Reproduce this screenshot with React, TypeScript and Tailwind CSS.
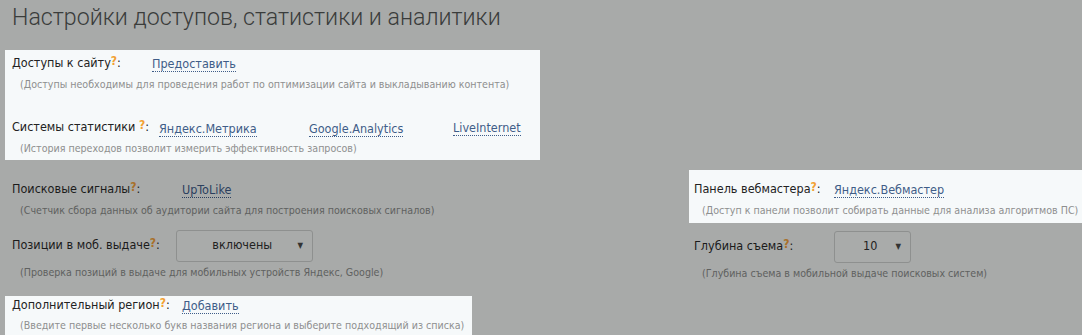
import React from "react";

const body = "font-['DejaVu_Sans_Condensed','DejaVu_Sans',sans-serif]";

function Q({ dim }: { dim?: boolean }) {
  return (
    <sup
      className={`relative -top-[2px] text-[12px] font-bold ${dim ? "text-[#a8702a]" : "text-[#f2a133]"}`}
    >
      ?
    </sup>
  );
}

function Link({ children, dim }: { children: React.ReactNode; dim?: boolean }) {
  return (
    <span
      className={`text-[12.5px] leading-[15px] border-b border-dotted ${
        dim ? "text-[#2c3f5e] border-[#2c3f5e]" : "text-[#3f5d88] border-[#3f5d88]"
      }`}
    >
      {children}
    </span>
  );
}

function Hint({ children, dim }: { children: React.ReactNode; dim?: boolean }) {
  return (
    <div className={`pl-[8px] h-[20px] leading-[20px] text-[10.6px] whitespace-nowrap ${dim ? "text-[#5f6160]" : "text-[#8e8f8f]"}`}>
      {children}
    </div>
  );
}

function Select({ value, w }: { value: string; w: string }) {
  return (
    <div
      className={`${w} h-[32px] border border-[#8e908f] rounded-[3px] bg-[#a9abaa] flex items-center justify-between pl-[10px] pr-[9px]`}
    >
      <span className="flex-1 text-center text-[12.5px] text-[#222]">{value}</span>
      <span className="text-[8px] text-[#333]">▼</span>
    </div>
  );
}

export default function App() {
  return (
    <div className={`w-[1082px] h-[335px] bg-[#a8aaa9] overflow-hidden ${body}`}>
      <h1 className="pl-[12px] pt-[1px] h-[50px] text-[23.2px] leading-[32px] font-light text-[#3a3c3b] font-['Roboto',sans-serif]">
        Настройки доступов, статистики и аналитики
      </h1>
      <div className="flex">
        <div className="w-[540px] shrink-0 flex flex-col">
          <div className="ml-[5px] bg-[#f6f9fa] pt-[3px] pb-[2px] pl-[7px] text-[#222]">
            <div className="h-[21px] flex items-center">
              <span className="w-[140px] text-[12.5px] whitespace-nowrap">
                Доступы к сайту<Q />:
              </span>
              <Link>Предоставить</Link>
            </div>
            <Hint>(Доступы необходимы для проведения работ по оптимизации сайта и выкладыванию контента)</Hint>
            <div className="h-[21px] mt-[23px] flex items-center">
              <span className="w-[147px] text-[12.5px] whitespace-nowrap">
                Системы статистики <Q />:
              </span>
              <span className="w-[150px]">
                <Link>Яндекс.Метрика</Link>
              </span>
              <span className="w-[144px]">
                <Link>Google.Analytics</Link>
              </span>
              <Link>LiveInternet</Link>
            </div>
            <Hint>(История переходов позволит измерить эффективность запросов)</Hint>
          </div>

          <div className="pl-[12px] pt-[19px] text-[#1b1b1b]">
            <div className="h-[21px] flex items-center">
              <span className="w-[170px] text-[12.5px] whitespace-nowrap">
                Поисковые сигналы<Q dim />:
              </span>
              <Link dim>UpToLike</Link>
            </div>
            <Hint dim>(Счетчик сбора данных об аудитории сайта для построения поисковых сигналов)</Hint>
            <div className="h-[33px] mt-[9px] flex items-center">
              <span className="w-[164px] text-[12.5px] whitespace-nowrap">
                Позиции в моб. выдаче<Q dim />:
              </span>
              <Select value="включены" w="w-[137px]" />
            </div>
            <Hint dim>(Проверка позиций в выдаче для мобильных устройств Яндекс, Google)</Hint>
          </div>

          <div className="ml-[5px] mt-[14px] w-[467px] bg-[#f6f9fa] pl-[7px] text-[#222]">
            <div className="h-[19px] flex items-center">
              <span className="w-[170px] text-[12.5px] whitespace-nowrap">
                Дополнительный регион<Q />:
              </span>
              <Link>Добавить</Link>
            </div>
            <Hint>(Введите первые несколько букв названия региона и выберите подходящий из списка)</Hint>
          </div>
        </div>

        <div className="ml-[149px] flex-1 flex flex-col pt-[120px]">
          <div className="bg-[#f6f9fa] pl-[5px] pt-[9px] pb-[3px] text-[#222]">
            <div className="h-[21px] flex items-center">
              <span className="w-[140px] text-[12.5px] whitespace-nowrap">
                Панель вебмастера<Q />:
              </span>
              <Link>Яндекс.Вебмастер</Link>
            </div>
            <Hint>(Доступ к панели позволит собирать данные для анализа алгоритмов ПС)</Hint>
          </div>
          <div className="pl-[5px] text-[#1b1b1b]">
            <div className="h-[33px] mt-[7px] flex items-center">
              <span className="w-[140px] text-[12.5px] whitespace-nowrap">
                Глубина съема<Q dim />:
              </span>
              <Select value="10" w="w-[77px]" />
            </div>
            <Hint dim>(Глубина съема в мобильной выдаче поисковых систем)</Hint>
          </div>
        </div>
      </div>
    </div>
  );
}
